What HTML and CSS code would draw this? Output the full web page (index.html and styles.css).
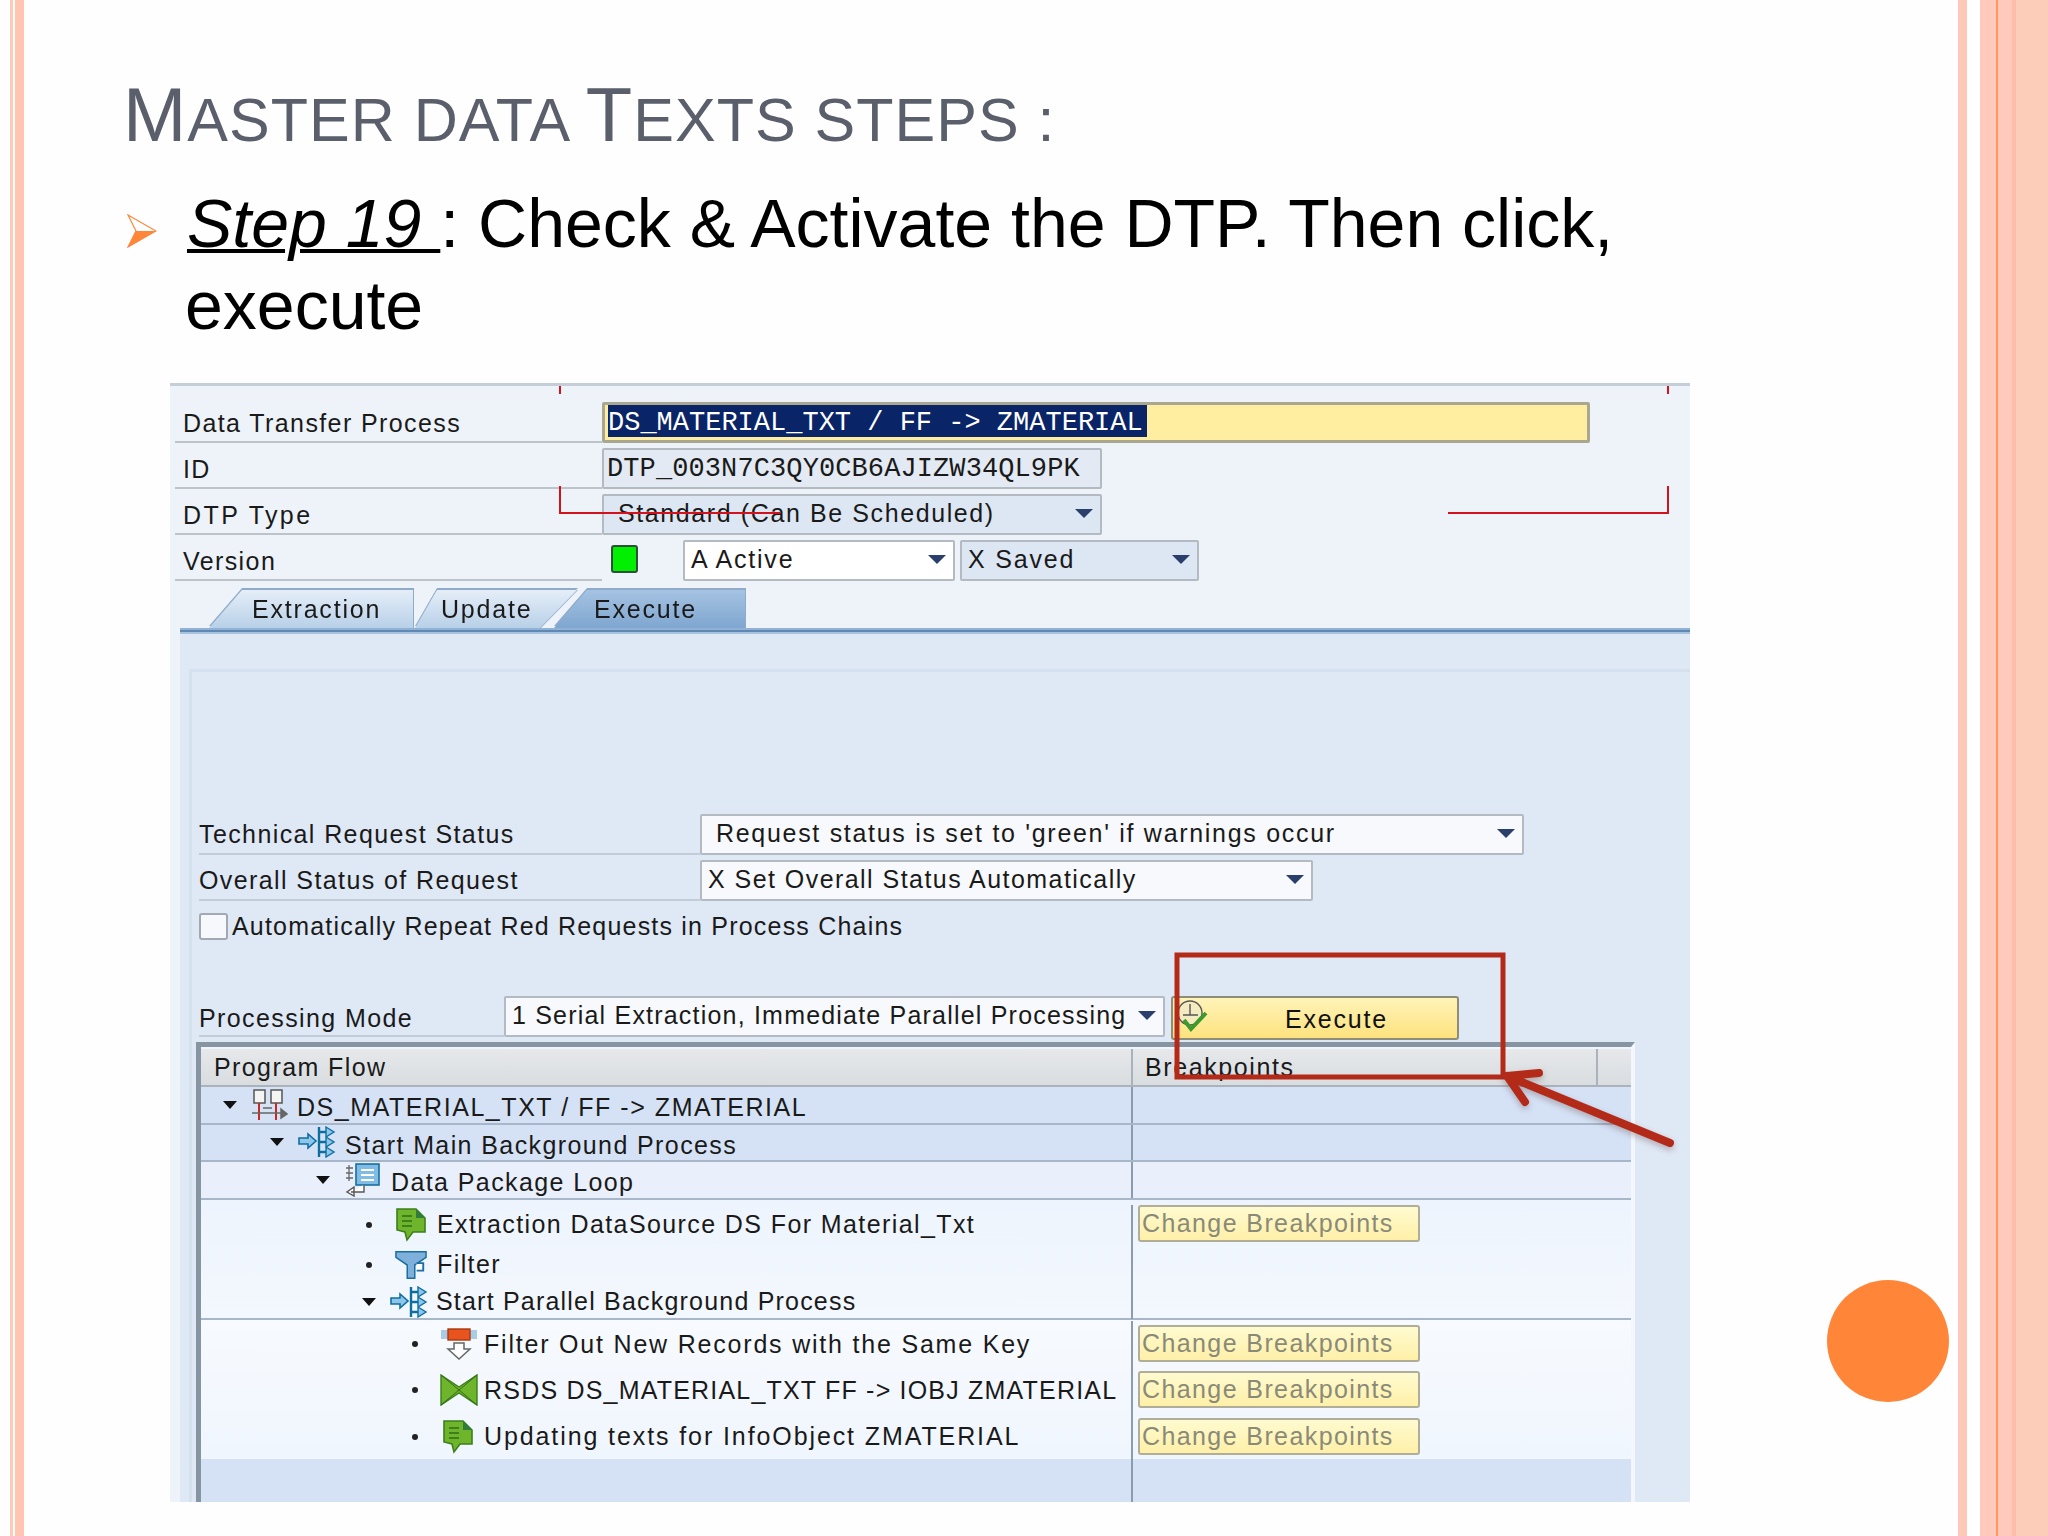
FILE: index.html
```html
<!DOCTYPE html>
<html lang="en">
<head>
    <meta charset="UTF-8">
    <title>Master data texts steps</title>
    <link rel="stylesheet" href="styles.css">
</head>
<body>
<div class="slide">
    <div class="stripes-left"><i class="thin"></i><i class="wide"></i></div>

    <main class="content">
        <h1 class="title"><b>M</b>ASTER DATA <b>T</b>EXTS STEPS :</h1>

        <div class="step">
            <svg class="bullet" viewBox="0 0 30 34" width="30" height="34">
                <path d="M1 1 L29 17 L1 33 L9 17 Z" fill="#fff" stroke="#ff8538" stroke-width="1.2"/>
                <path d="M9 17 L29 17 L1 33 Z" fill="#ff8538"/>
            </svg>
            <p class="step-text"><span class="step-no">Step 19 </span>: Check &amp; Activate the DTP. Then click, execute</p>
        </div>

        <section class="sap">
            <!-- Header fields -->
            <div class="form-row">
                <label class="lbl lbl-top">Data Transfer Process</label>
                <div class="field field-main"><span class="selected">DS_MATERIAL_TXT / FF -&gt; ZMATERIAL</span></div>
            </div>
            <div class="form-row">
                <label class="lbl lbl-top">ID</label>
                <div class="field field-id">DTP_003N7C3QY0CB6AJIZW34QL9PK</div>
            </div>
            <div class="form-row">
                <label class="lbl lbl-top lbl-type">DTP Type</label>
                <div class="select select-type">Standard (Can Be Scheduled)<i class="caret"></i></div>
            </div>
            <div class="form-row">
                <label class="lbl lbl-top">Version</label>
                <div class="led-cell"><i class="led"></i></div>
                <div class="select select-active">A Active<i class="caret"></i></div>
                <div class="select select-saved">X Saved<i class="caret"></i></div>
            </div>

            <!-- Tabs -->
            <div class="tabs">
                <div class="tab tab-extraction">Extraction</div>
                <div class="tab tab-update">Update</div>
                <div class="tab tab-execute">Execute</div>
            </div>

            <div class="tab-body">
                <div class="group">
                    <div class="form-row">
                        <label class="lbl lbl-inner">Technical Request Status</label>
                        <div class="select select-status">Request status is set to 'green' if warnings occur<i class="caret"></i></div>
                    </div>
                    <div class="form-row">
                        <label class="lbl lbl-inner">Overall Status of Request</label>
                        <div class="select select-overall">X Set Overall Status Automatically<i class="caret"></i></div>
                    </div>
                    <div class="check-row"><i class="checkbox"></i>Automatically Repeat Red Requests in Process Chains</div>
                    <div class="form-row mode-row">
                        <label class="lbl lbl-mode">Processing Mode</label>
                        <div class="select select-mode">1 Serial Extraction, Immediate Parallel Processing<i class="caret"></i></div>
                        <div class="exec-btn">
                            <svg class="exec-icon" viewBox="0 0 34 34" width="34" height="34">
                                <circle cx="14" cy="13" r="12" fill="#f4ecc0" stroke="#555" stroke-width="1.4"/>
                                <path d="M14 4 V15 M7 15 H22" fill="none" stroke="#555" stroke-width="1.4"/>
                                <path d="M8 20 L15 29 L30 13" fill="none" stroke="#3f9a2e" stroke-width="4"/>
                            </svg>
                            Execute
                        </div>
                    </div>

                    <!-- Program flow tree -->
                    <div class="tree">
                        <div class="tree-head">
                            <div class="c1">Program Flow</div>
                            <div class="c2">Breakpoints</div>
                            <div class="c3"></div>
                        </div>

                        <div class="tr tr-blue">
                            <div class="c1 lv0 sp-root"><i class="tri"></i>
                                <svg class="ico ico-wide" viewBox="0 0 37 32" width="37" height="32">
                                    <rect x="3" y="1" width="11" height="13" fill="#f4f4f4" stroke="#555" stroke-width="1.5"/>
                                    <rect x="20" y="1" width="11" height="13" fill="#f4f4f4" stroke="#555" stroke-width="1.5"/>
                                    <path d="M8 14 V31 M25 14 V31" stroke="#c8281e" stroke-width="2"/>
                                    <path d="M1 24 H32 M12 19 H21 M30 20 L36 25 L30 29 Z" stroke="#666" stroke-width="1.5" fill="#666"/>
                                </svg>
                                DS_MATERIAL_TXT / FF -&gt; ZMATERIAL</div>
                            <div class="c2"></div>
                        </div>
                        <div class="tr tr-blue">
                            <div class="c1 lv1"><i class="tri"></i>
                                <svg class="ico ico-wide" viewBox="0 0 38 32" width="38" height="32">
                                    <use href="#start-proc"/>
                                </svg>
                                Start Main Background Process</div>
                            <div class="c2"></div>
                        </div>
                        <div class="tr tr-pale">
                            <div class="c1 lv2"><i class="tri"></i>
                                <svg class="ico ico-loop" viewBox="0 0 36 34" width="36" height="34">
                                    <path d="M2 5 H9 M2 10 H9 M2 15 H9 M5 2 V18" stroke="#666" stroke-width="1.3" fill="none"/>
                                    <rect x="12" y="1" width="23" height="21" fill="#7fbde6" stroke="#1a6fa0" stroke-width="1.6"/>
                                    <path d="M17 7 H30 M17 12 H30 M17 17 H30" stroke="#fff" stroke-width="2"/>
                                    <path d="M20 22 V29 H7 M10 24 L3 29 L10 33 Z" fill="#fff" stroke="#555" stroke-width="1.4"/>
                                </svg>
                                Data Package Loop</div>
                            <div class="c2"></div>
                        </div>

                        <div class="block-mid">
                            <div class="tr tr-plain">
                                <div class="c1 lv3"><i class="dot"></i>
                                    <svg class="ico ico-doc" viewBox="0 0 32 34" width="32" height="34">
                                        <use href="#doc-bubble"/>
                                    </svg>
                                    Extraction DataSource DS For Material_Txt</div>
                                <div class="c2"><div class="bp-btn">Change Breakpoints</div></div>
                            </div>
                            <div class="tr tr-plain">
                                <div class="c1 lv3"><i class="dot"></i>
                                    <svg class="ico ico-doc" viewBox="0 0 34 30" width="32" height="30">
                                        <path d="M1 1 H33 V7 L21 15 V29 H13 V15 L1 7 Z" fill="#7fb0dc" stroke="#1a6fa0" stroke-width="1.6"/>
                                        <path d="M23 13 H30 V21 H23" fill="#fff" stroke="#1a6fa0" stroke-width="2"/>
                                    </svg>
                                    Filter</div>
                                <div class="c2"></div>
                            </div>
                            <div class="tr tr-plain">
                                <div class="c1 lv3 sp-tight"><i class="tri"></i>
                                    <svg class="ico ico-doc" viewBox="0 0 38 32" width="38" height="32">
                                        <use href="#start-proc"/>
                                    </svg>
                                    Start Parallel Background Process</div>
                                <div class="c2"></div>
                            </div>
                        </div>

                        <div class="block-low">
                            <div class="tr tr-plain">
                                <div class="c1 lv4 sp-wide"><i class="dot"></i>
                                    <svg class="ico ico-narrow" viewBox="0 0 38 32" width="38" height="32">
                                        <rect x="1" y="2" width="36" height="9" fill="#a9cbe6"/>
                                        <rect x="8" y="1" width="22" height="11" fill="#e8531e" stroke="#a83a10" stroke-width="1.4"/>
                                        <path d="M14 15 H24 V21 H30 L19 31 L8 21 H14 Z" fill="#fff" stroke="#666" stroke-width="1.5"/>
                                    </svg>
                                    Filter Out New Records with the Same Key</div>
                                <div class="c2"><div class="bp-btn">Change Breakpoints</div></div>
                            </div>
                            <div class="tr tr-plain">
                                <div class="c1 lv4 sp-tight"><i class="dot"></i>
                                    <svg class="ico ico-narrow" viewBox="0 0 38 32" width="38" height="32">
                                        <path d="M1 1 L19 13 L37 1 V31 L19 19 L1 31 Z" fill="#6fb52c" stroke="#3c7f1c" stroke-width="1.4"/>
                                        <path d="M1 1 L37 31 M37 1 L1 31" stroke="#2f6d18" stroke-width="1"/>
                                    </svg>
                                    RSDS DS_MATERIAL_TXT FF -&gt; IOBJ ZMATERIAL</div>
                                <div class="c2"><div class="bp-btn">Change Breakpoints</div></div>
                            </div>
                            <div class="tr tr-plain">
                                <div class="c1 lv4 sp-max"><i class="dot"></i>
                                    <svg class="ico ico-upd" viewBox="0 0 32 34" width="32" height="34">
                                        <use href="#doc-bubble"/>
                                    </svg>
                                    Updating texts for InfoObject ZMATERIAL</div>
                                <div class="c2"><div class="bp-btn">Change Breakpoints</div></div>
                            </div>
                        </div>

                        <div class="tree-empty"><div class="c1"></div><div class="c2"></div></div>
                    </div>
                </div>
            </div>

            <!-- Markup drawn over the screenshot -->
            <svg class="marks" viewBox="0 0 1520 1119" width="1520" height="1119">
                <path d="M390 0 V11 M1498 0 V11" stroke="#d2121c" stroke-width="2" fill="none"/>
                <path d="M390 103 V130 H610 M1278 130 H1498 V103" stroke="#d2121c" stroke-width="2" fill="none"/>
                <rect x="1007" y="572" width="326" height="122" fill="none" stroke="#b42a18" stroke-width="5"/>
                <path class="arrow" d="M1500 760 L1337 693 M1369 690 L1337 693 L1355 719" fill="none" stroke="#b42a18" stroke-width="8" stroke-linecap="round" stroke-linejoin="round"/>
            </svg>
        </section>
    </main>

    <div class="circle"></div>
    <div class="stripes-right"><i class="s1"></i><i class="s2"></i><i class="s3"></i><i class="s4"></i><i class="s5"></i><i class="s6"></i><i class="s7"></i></div>
</div>

<svg class="defs" width="0" height="0">
    <symbol id="doc-bubble" viewBox="0 0 32 34">
        <path d="M2 1 H21 L30 10 V24 H18 L12 32 L10 24 L2 22 Z" fill="#6fb52c" stroke="#3c7f1c" stroke-width="1.6"/>
        <path d="M21 1 V10 H30 Z" fill="#2f7d3a"/>
        <path d="M7 8 H17 M7 13 H17 M7 18 H17" stroke="#2f6d18" stroke-width="1.6"/>
    </symbol>
    <symbol id="start-proc" viewBox="0 0 38 32">
        <path d="M1 12 H10 V8 L18 15 L10 22 V18 H1 Z" fill="#8ec5ea" stroke="#0e6f9f" stroke-width="1.6"/>
        <path d="M21 1 V31 M21 6 H29 M21 16 H29 M21 26 H29" fill="none" stroke="#0e6f9f" stroke-width="2.4"/>
        <path d="M28 1 L36 6 L28 11 Z M28 11 L36 16 L28 21 Z M28 21 L36 26 L28 31 Z" fill="#8ec5ea" stroke="#0e6f9f" stroke-width="1.4"/>
    </symbol>
</svg>
</body>
</html>
```

FILE: styles.css
```css
* {
    box-sizing: border-box;
}

body {
    margin: 0;
    background: #fdfefd;
    font-family: 'Liberation Sans', Arial, sans-serif;
}

.slide {
    display: flex;
    position: relative;
    width: 2048px;
    height: 1536px;
    overflow: hidden;
}

.stripes-left {
    display: flex;
    flex: none;
    width: 24px;
    padding-left: 10px;
    gap: 2px;
}

.stripes-left i, .stripes-right i {
    display: block;
}

.stripes-left .thin {
    width: 3px;
    background: #ffc9b8;
}

.stripes-left .wide {
    width: 9px;
    background: #ffc4b2;
}

.content {
    flex: none;
    width: 1934px;
    padding-left: 100px;
}

.title {
    margin: 0 0 0 -1px;
    padding-top: 75px;
    height: 168px;
    font-size: 61px;
    line-height: 80px;
    font-weight: 400;
    letter-spacing: 1px;
    color: #5a5f6b;
    white-space: nowrap;
}

.title b {
    font-size: 76px;
    font-weight: 400;
}

.step {
    display: flex;
    align-items: flex-start;
    height: 215px;
}

.bullet {
    flex: none;
    margin: 46px 28px 0 3px;
}

.step-text {
    margin: 0;
    padding-top: 14px;
    width: 1480px;
    font-size: 68px;
    line-height: 82px;
    color: #000;
}

.step-no {
    margin-left: 2px;
    font-style: italic;
    text-decoration: underline;
    text-decoration-thickness: 4px;
}

/* SAP screenshot */
.sap {
    position: relative;
    width: 1520px;
    height: 1119px;
    margin-left: 46px;
    padding-top: 16px;
    overflow: hidden;
    background: #eef3f9;
    border-top: 3px solid #c5ced8;
    font-family: 'Liberation Sans', sans-serif;
    font-size: 25px;
    letter-spacing: 1.8px;
    color: #1a1a1a;
}

.marks {
    position: absolute;
    left: 0;
    top: -3px;
    pointer-events: none;
}

.arrow {
    filter: drop-shadow(0 3px 3px rgba(90, 60, 60, 0.35));
}

.form-row {
    display: flex;
    height: 41px;
    margin-bottom: 5px;
}

.lbl {
    flex: none;
    display: flex;
    align-items: flex-end;
    height: 41px;
    padding-bottom: 3px;
    border-bottom: 2px solid #bcc3cb;
    letter-spacing: 1.4px;
    white-space: nowrap;
}

.lbl-top {
    width: 427px;
    margin-left: 5px;
    padding-left: 8px;
}

.lbl-type {
    letter-spacing: 2.4px;
}

.lbl-inner {
    width: 501px;
    padding-bottom: 4px;
}

.lbl-mode {
    width: 305px;
    padding-bottom: 2px;
}

.field, .select {
    position: relative;
    flex: none;
    height: 41px;
    line-height: 34px;
    border: 2px solid #b4bac1;
    border-radius: 2px;
    white-space: nowrap;
}

.field {
    padding-left: 3px;
    font-family: 'Liberation Mono', monospace;
    font-size: 27px;
    letter-spacing: 0;
}

.field-main {
    width: 988px;
    background: #ffeea0;
    border-color: #a9a78f;
    border-width: 3px;
    line-height: 36px;
}

.selected {
    display: inline-block;
    height: 32px;
    background: #0a2468;
    color: #fff;
    padding-right: 4px;
}

.field-id {
    width: 500px;
    line-height: 39px;
    letter-spacing: 0.1px;
    background: #e3eaf3;
}

.select {
    padding-left: 6px;
    background: #dde7f3;
}

.select-type {
    width: 500px;
    padding-left: 14px;
    letter-spacing: 1.6px;
}

.led-cell {
    flex: none;
    width: 81px;
    padding: 5px 0 0 9px;
}

.led {
    display: block;
    width: 27px;
    height: 28px;
    background: #00f000;
    border: 2px solid #2f4f3a;
    border-radius: 3px;
}

.select-active {
    width: 272px;
    background: #fff;
}

.select-saved {
    width: 239px;
    margin-left: 5px;
}

.caret {
    position: absolute;
    right: 7px;
    top: 13px;
    width: 0;
    height: 0;
    border-left: 9px solid transparent;
    border-right: 9px solid transparent;
    border-top: 9px solid #2a3f6b;
}

/* Tabs */
.tabs {
    display: flex;
    height: 38px;
    margin: 9px 0 0 39px;
    filter: drop-shadow(0 -2px 0 #8fabc9) drop-shadow(1px 0 0 #8fabc9);
}

.tab {
    flex: none;
    height: 38px;
    line-height: 38px;
    background: linear-gradient(#e5eef8, #b8d0e8);
    white-space: nowrap;
}

.tab-extraction {
    width: 204px;
    padding-left: 43px;
    clip-path: polygon(33px 0, 100% 0, 100% 100%, 0 100%);
}

.tab-update {
    width: 162px;
    margin-left: 2px;
    padding-left: 26px;
    clip-path: polygon(22px 0, 100% 0, 125px 100%, 0 100%);
}

.tab-execute {
    width: 191px;
    margin-left: -23px;
    padding-left: 40px;
    background: linear-gradient(#a5c3e2, #7fa6d0);
    clip-path: polygon(33px 0, 100% 0, 100% 100%, 0 100%);
}

.tab-body {
    height: 882px;
    margin-left: 10px;
    padding: 35px 0 0 9px;
    background: #dfe8f5;
    border-top: 6px solid #8cafd4;
    border-image: linear-gradient(#8fb2d6 0 2px, #6088b2 2px 4px, #a6c2de 4px) 6 0 0;
}

.group {
    height: 100%;
    padding: 142px 0 0 7px;
    border-top: 3px solid #d6e1ef;
    border-left: 3px solid #d6e1ef;
}

.group .lbl {
    border-bottom-color: #c2ccd8;
}

.select-status {
    width: 824px;
    background: #f7f9fc;
    padding-left: 14px;
    letter-spacing: 1.7px;
}

.select-overall {
    width: 613px;
    background: #f7f9fc;
    letter-spacing: 1.45px;
}

.check-row {
    display: flex;
    align-items: center;
    gap: 4px;
    height: 27px;
    margin: 12px 0 56px;
    letter-spacing: 1.2px;
    white-space: nowrap;
}

.checkbox {
    flex: none;
    width: 29px;
    height: 27px;
    background: #f6f8fb;
    border: 2px solid #a2a9b2;
    border-radius: 3px;
}

.mode-row {
    height: 41px;
    margin-bottom: 5px;
}

.select-mode {
    width: 661px;
    background: #f7f9fc;
    letter-spacing: 1.2px;
}

.exec-btn {
    position: relative;
    flex: none;
    width: 288px;
    height: 44px;
    margin-left: 6px;
    line-height: 42px;
    padding-left: 112px;
    background: linear-gradient(#fff3b8, #fde27e);
    border: 2px solid #8e8d7a;
    border-radius: 3px;
    color: #111;
}

.exec-icon {
    position: absolute;
    left: 3px;
    top: 2px;
}

/* Program flow tree */
.tree {
    width: 1439px;
    margin-left: -3px;
    border-top: 5px solid #8795a3;
    border-left: 5px solid #8795a3;
    border-right: 4px solid #f3f7fd;
    padding-top: 2px;
    background: #eff5fd;
    letter-spacing: 1.4px;
}

.tree-head {
    display: flex;
    height: 38px;
    line-height: 36px;
    background: linear-gradient(#e6e8ea, #d9dde0);
    border-bottom: 2px solid #aab3bc;
}

.tree-head .c1 {
    padding-left: 13px;
}

.tree-head .c2 {
    width: 465px;
    flex: none;
    padding-left: 12px;
    border-left: 2px solid #aab3bc;
    letter-spacing: 1.6px;
}

.tree-head .c3 {
    flex: 1;
    border-left: 2px solid #aab3bc;
}

.c1 {
    display: flex;
    align-items: center;
    flex: none;
    width: 930px;
    white-space: nowrap;
}

.c2 {
    flex: 1;
    border-left: 2px solid #8d9cac;
}

.tr {
    display: flex;
    height: 37.5px;
}

.tr-blue, .tr-pale {
    border-bottom: 2px solid #a7b7c9;
}

.tr-blue {
    background: #d5e2f6;
}

.tr-pale {
    background: #e9f0fb;
}

/* the text in the upper rows sits lower than its icon */
.tr-blue .c1, .tr-pale .c1 {
    padding-top: 6px;
}

.tr-blue .ico, .tr-pale .ico, .tr-blue .tri, .tr-pale .tri {
    margin-top: -6px;
}

.sp-root {
    letter-spacing: 1.55px;
}

.sp-wide {
    letter-spacing: 1.8px;
}

.sp-max {
    letter-spacing: 1.9px;
}

.sp-tight {
    letter-spacing: 1.2px;
}

.block-mid {
    height: 120.5px;
    padding-top: 5px;
    border-bottom: 2px solid #a7b7c9;
    background: linear-gradient(#eef4fd, #f3f8fe);
}

.block-mid .tr {
    height: 40px;
}

.block-mid .tr:last-child {
    height: 34px;
}

.block-mid .bp-btn {
    margin-top: 0;
}

.block-low {
    height: 139px;
    padding-top: 1px;
    background: linear-gradient(#f7fafe, #f0f6fe);
}

.block-low .tr {
    height: 46.33px;
}

.tree-empty {
    display: flex;
    height: 60px;
    background: #d5e2f6;
}

.tri {
    flex: none;
    width: 0;
    height: 0;
    margin-right: 14px;
    border-left: 7.5px solid transparent;
    border-right: 7.5px solid transparent;
    border-top: 8px solid #111;
}

.dot {
    flex: none;
    width: 6px;
    height: 6px;
    margin: 0 23px 0 4px;
    background: #222;
    border-radius: 50%;
}

.ico {
    flex: none;
    margin-right: 8px;
}

.ico-wide {
    margin-right: 9px;
}

.ico-loop {
    margin-right: 11px;
}

.ico-doc {
    margin-right: 10px;
}

.tri + .ico-doc {
    margin-right: 8px;
}

.ico-narrow {
    margin: 0 6px 0 -1px;
}

.ico-upd {
    margin: 0 10px 0 1px;
}

.lv0 {
    padding-left: 22px;
}

.lv1 {
    padding-left: 69px;
}

.lv2 {
    padding-left: 115px;
}

.lv3 {
    padding-left: 161px;
}

.lv4 {
    padding-left: 207px;
}

.bp-btn {
    width: 282px;
    height: 37px;
    margin: 4px 0 0 5px;
    line-height: 33px;
    padding-left: 2px;
    background: linear-gradient(#fffbd0, #fff0a8);
    border: 2px solid #b0ae98;
    border-radius: 3px;
    color: #8a8a78;
    white-space: nowrap;
}

/* Decoration */
.circle {
    position: absolute;
    left: 1827px;
    top: 1280px;
    width: 122px;
    height: 122px;
    background: #ff8538;
    border-radius: 50%;
}

.stripes-right {
    display: flex;
    flex: none;
    width: 90px;
}

.s1 { width: 9px; background: #ffc9b8; }
.s2 { width: 13px; background: #fff; }
.s3 { width: 16px; background: #ffcabb; }
.s4 { width: 2px; background: #ff9a5a; }
.s5 { width: 14px; background: #ffcabb; }
.s6 { width: 4px; background: #fdbda6; }
.s7 { flex: 1; background: #fccdb8; }

.defs {
    position: absolute;
}
```
